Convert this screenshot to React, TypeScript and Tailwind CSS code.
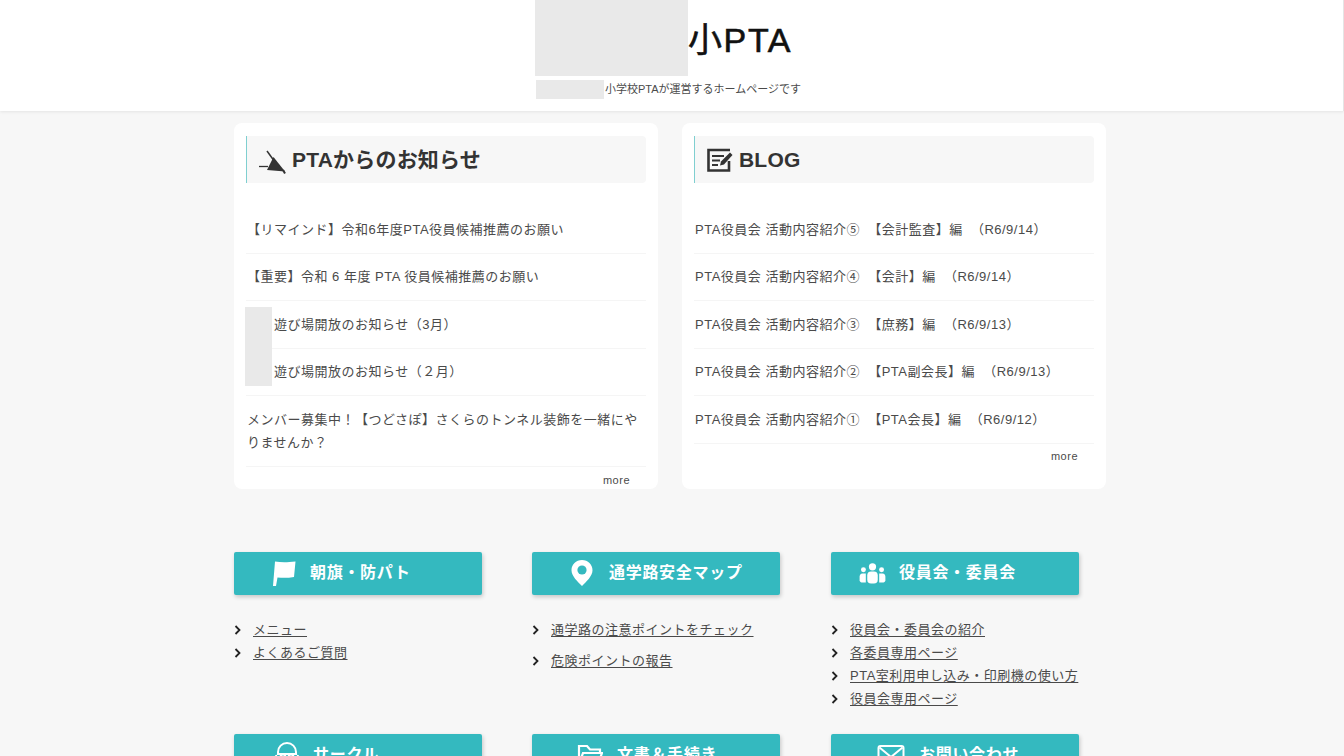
import { ReactNode } from "react";

const jp = "font-['Liberation_Sans','Noto_Sans_CJK_JP',sans-serif]";

function MegaphoneIcon() {
  return (
    <svg viewBox="0 0 27 24" className="w-[27px] h-6 shrink-0 overflow-visible text-[#333]">
      <path d="M0 18.500h9" stroke="currentColor" strokeWidth="1.300" fill="none" />
      <path d="M8 3l6.500 9" stroke="currentColor" strokeWidth="1.500" fill="none" />
      <path d="M14.500 9L8 22l18 1.500z" fill="currentColor" />
      <path d="M24 22l2 3.500" stroke="currentColor" strokeWidth="2" fill="none" />
    </svg>
  );
}

function BlogIcon() {
  return (
    <svg viewBox="0 0 26 24" className="w-[26px] h-6 shrink-0 text-[#333]" fill="none" stroke="currentColor">
      <path d="M22 13v9.500H1.500V2H23" strokeWidth="2.600" />
      <path d="M5 8h12M5 12.500h8M5 17h6" strokeWidth="2" />
      <path d="M13 17.500l1-4L23 4.500l2.500 2.500-8.500 9.500z" fill="currentColor" stroke="none" />
    </svg>
  );
}

function FlagIcon() {
  return (
    <svg viewBox="0 0 24 28" className="w-6 h-7 text-white" fill="currentColor">
      <path d="M3 2.500c6 1 12 1 20.500 0L22 18c-6 1-11 1-16.500.5L4 27H1z" />
    </svg>
  );
}

function PinIcon() {
  return (
    <svg viewBox="0 0 24 28" className="w-6 h-7 text-white">
      <path d="M12 1C6 1 1.500 5.500 1.500 11.200 1.500 17 7.500 22.500 12 27c4.500-4.500 10.500-10 10.500-15.800C22.500 5.500 18 1 12 1z" fill="currentColor" />
      <circle cx="12" cy="11" r="4.600" fill="#34b9bf" />
    </svg>
  );
}

function UsersIcon() {
  return (
    <svg viewBox="0 0 28 22" className="w-[27px] h-[21px] text-white" fill="currentColor">
      <circle cx="14" cy="4" r="3.800" />
      <circle cx="4.500" cy="7" r="2.600" />
      <circle cx="23.500" cy="7" r="2.600" />
      <rect x="8.500" y="9" width="11" height="12.500" rx="4" />
      <path d="M7 11H3.500C1.500 11 .5 12.500 .5 14.500V18c0 1.500 1.500 2.500 3 2.500H7z" />
      <path d="M21 11h3.500c2 0 3 1.500 3 3.500V18c0 1.500-1.500 2.500-3 2.500H21z" />
    </svg>
  );
}

function BagIcon() {
  return (
    <svg viewBox="0 0 26 26" className="w-[26px] h-[26px] text-white" fill="none" stroke="currentColor" strokeWidth="2">
      <path d="M4 13V10a9 9 0 0 1 18 0v3" />
      <path d="M3 12h20M2 13l2 11h18l2-11" />
      <circle cx="9" cy="15" r="2.500" />
      <circle cx="17" cy="15" r="2.500" />
    </svg>
  );
}

function FolderIcon() {
  return (
    <svg viewBox="0 0 26 22" className="w-[26px] h-[22px] text-white" fill="none" stroke="currentColor" strokeWidth="2.200">
      <path d="M2 20V2h8l3 3.500h10V9M2 20L6 9h19l-4 11z" />
    </svg>
  );
}

function MailIcon() {
  return (
    <svg viewBox="0 0 28 22" className="w-7 h-[22px] text-white" fill="none" stroke="currentColor" strokeWidth="2">
      <rect x="1.500" y="2" width="25" height="18" rx="2" />
      <path d="M2.500 3.500L14 13 25.500 3.500" />
    </svg>
  );
}

function Chevron() {
  return (
    <svg viewBox="0 0 8 10" className="w-2 h-2.5 shrink-0 text-[#222]" fill="none" stroke="currentColor" strokeWidth="1.800">
      <path d="M1.500 1l4 4-4 4" />
    </svg>
  );
}

function PanelHeading({ icon, title }: { icon: ReactNode; title: string }) {
  return (
    <div className="flex items-center h-[47px] gap-[6px] pl-3 border-l border-[#7fcfd0] bg-[#f7f7f7] rounded-r-sm">
      {icon}
      <h2 className="text-[21px] font-bold leading-none tracking-[0.2px] text-[#333]">{title}</h2>
    </div>
  );
}

function NewsRow({ children, masked }: { children: ReactNode; masked?: boolean }) {
  return (
    <li
      className={
        "px-px py-[11.75px] text-[13px] leading-[23px] tracking-[0.5px] whitespace-pre-wrap text-[#4a4a4a] border-b border-[#f5f5f5] " +
        (masked ? "pl-[28px]" : "")
      }
    >
      {children}
    </li>
  );
}

function MenuColumn({
  icon,
  label,
  gap,
  links,
  labelOffset,
}: {
  icon: ReactNode;
  label: string;
  gap: string;
  links: string[];
  labelOffset: string;
}) {
  return (
    <div className="w-[248px]">
      <div className="flex items-center h-[43px] rounded-[2px] bg-[#34b9bf] shadow-[1px_2px_4px_rgba(0,0,0,0.2)] text-white">
        <div className={"flex items-center " + labelOffset}>
          {icon}
          <span className="text-[16px] font-bold leading-none pb-px tracking-[0.7px]">{label}</span>
        </div>
      </div>
      <ul className={"mt-[24px] flex flex-col " + gap}>
        {links.map((link) => (
          <li key={link} className="flex items-center h-[23px] gap-[11px] text-[13px] tracking-[0.5px] text-[#4a4a4a]">
            <Chevron />
            <a href="#" className="underline underline-offset-2">
              {link}
            </a>
          </li>
        ))}
      </ul>
    </div>
  );
}

export default function App() {
  return (
    <div className={"h-screen overflow-hidden bg-[#f7f7f7] " + jp}>
      {/* Header */}
      <header className="h-[111px] bg-white shadow-[0_1px_3px_rgba(0,0,0,0.08)] border-r border-[#e5e5e5]">
        <div className="flex flex-col w-[300px] ml-[535px]">
          <div className="flex items-center h-[76px]">
            <div className="w-[153px] h-[76px] bg-[#e9e9e9]" />
            <h1 className="text-[34px] leading-none tracking-[1.6px] [-webkit-text-stroke:0.6px_#111] text-[#111] pt-[4px]">小PTA</h1>
          </div>
          <div className="flex items-center mt-1 ml-px">
            <div className="w-[68px] h-[19px] bg-[#e9e9e9]" />
            <p className="ml-px text-[11px] text-[#4a4a4a]">小学校PTAが運営するホームページです</p>
          </div>
        </div>
      </header>

      <main className="w-[872px] ml-[234px] mt-3">
        {/* News and blog panels */}
        <div className="grid grid-cols-2 gap-6">
          <section className="relative bg-white rounded-lg pt-[13px] px-3 pb-px">
            <PanelHeading icon={<MegaphoneIcon />} title="PTAからのお知らせ" />
            <ul className="mt-[23px]">
              <NewsRow>【リマインド】令和6年度PTA役員候補推薦のお願い</NewsRow>
              <NewsRow>【重要】令和 6 年度 PTA 役員候補推薦のお願い</NewsRow>
              <NewsRow masked>遊び場開放のお知らせ（3月）</NewsRow>
              <NewsRow masked>遊び場開放のお知らせ（２月）</NewsRow>
              <NewsRow>メンバー募集中！【つどさぽ】さくらのトンネル装飾を一緒にやりませんか？</NewsRow>
            </ul>
            <div className="absolute left-[11px] top-[184px] w-[27px] h-[79px] bg-[#e9e9e9]" />
            <p className="mt-[5px] pr-4 text-right text-[11px] leading-4 tracking-[0.5px] text-[#4a4a4a]">more</p>
          </section>

          <section className="bg-white rounded-lg pt-[13px] px-3 pb-px">
            <PanelHeading icon={<BlogIcon />} title="BLOG" />
            <ul className="mt-[23px]">
              <NewsRow>PTA役員会 活動内容紹介⑤  【会計監査】編  （R6/9/14）</NewsRow>
              <NewsRow>PTA役員会 活動内容紹介④  【会計】編  （R6/9/14）</NewsRow>
              <NewsRow>PTA役員会 活動内容紹介③  【庶務】編  （R6/9/13）</NewsRow>
              <NewsRow>PTA役員会 活動内容紹介②  【PTA副会長】編  （R6/9/13）</NewsRow>
              <NewsRow>PTA役員会 活動内容紹介①  【PTA会長】編  （R6/9/12）</NewsRow>
            </ul>
            <p className="mt-[4px] pr-4 text-right text-[11px] leading-4 tracking-[0.5px] text-[#4a4a4a]">more</p>
          </section>
        </div>

        {/* Menu */}
        <div className="grid grid-cols-[248px_249px_248px] gap-y-[23px] gap-x-[50px] mt-[63px]">
          <MenuColumn
            icon={<FlagIcon />}
            label="朝旗・防パト"
            labelOffset="ml-[38px] gap-[14px]"
            gap=""
            links={["メニュー", "よくあるご質問"]}
          />
          <MenuColumn
            icon={<PinIcon />}
            label="通学路安全マップ"
            labelOffset="ml-[38px] gap-[15px]"
            gap="gap-[8px]"
            links={["通学路の注意ポイントをチェック", "危険ポイントの報告"]}
          />
          <MenuColumn
            icon={<UsersIcon />}
            label="役員会・委員会"
            labelOffset="ml-[28px] gap-[13px]"
            gap=""
            links={["役員会・委員会の紹介", "各委員専用ページ", "PTA室利用申し込み・印刷機の使い方", "役員会専用ページ"]}
          />
          <MenuColumn icon={<BagIcon />} label="サークル" labelOffset="ml-[40px] gap-[13px]" gap="" links={[]} />
          <MenuColumn icon={<FolderIcon />} label="文書＆手続き" labelOffset="ml-[45px] gap-[14px]" gap="" links={[]} />
          <MenuColumn icon={<MailIcon />} label="お問い合わせ" labelOffset="ml-[46px] gap-[14px]" gap="" links={[]} />
        </div>
      </main>
    </div>
  );
}
